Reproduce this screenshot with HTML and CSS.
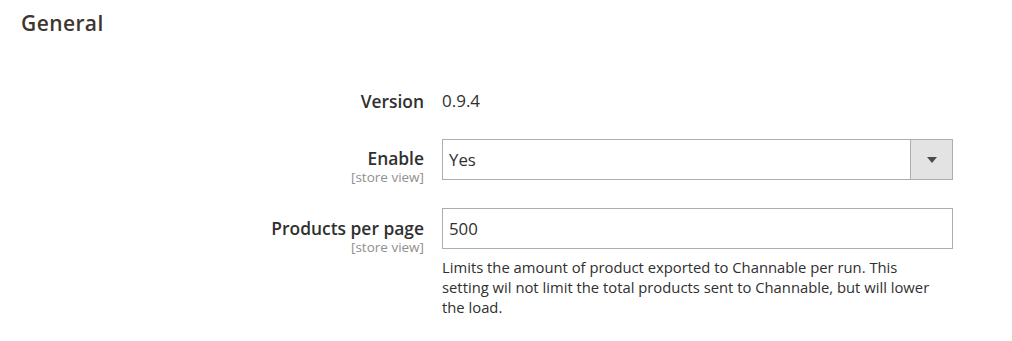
FILE: index.html
```html
<!DOCTYPE html>
<html>
<head>
<meta charset="utf-8">
<link rel="stylesheet" href="styles.css">
</head>
<body>
<div class="section">
  <h2 class="section-title">General</h2>
  <div class="fields">
    <div class="row row-version">
      <div class="label"><span class="label-text">Version</span></div>
      <div class="value"><span class="value-text">0.9.4</span></div>
    </div>
    <div class="row row-enable">
      <div class="label"><span class="label-text">Enable</span><span class="scope">[store view]</span></div>
      <div class="value">
        <div class="select">
          <span class="select-text">Yes</span>
          <span class="select-btn"><span class="arrow"></span></span>
        </div>
      </div>
    </div>
    <div class="row row-products">
      <div class="label"><span class="label-text">Products per page</span><span class="scope">[store view]</span></div>
      <div class="value">
        <div class="input"><span class="input-text">500</span></div>
        <p class="note">Limits the amount of product exported to Channable per run. This setting wil not limit the total products sent to Channable, but will lower the load.</p>
      </div>
    </div>
  </div>
</div>
</body>
</html>
```

FILE: styles.css
```css
html, body {
  margin: 0;
  padding: 0;
  background: #ffffff;
}
body {
  font-family: "Open Sans", "Liberation Sans", sans-serif;
  color: #303030;
  width: 1012px;
  height: 341px;
  overflow: hidden;
}
.section {
  padding: 8px 0 0 21px;
}
.section-title {
  margin: 0;
  font-size: 21px;
  font-weight: 600;
  letter-spacing: 0.4px;
  line-height: 30px;
  color: #41362f;
}
.fields {
  display: flex;
  flex-direction: column;
  margin-top: 51px;
  margin-left: -21px;
}
.row {
  display: grid;
  grid-template-columns: 424px 511px;
  column-gap: 18px;
}
.label {
  display: flex;
  flex-direction: column;
  align-items: flex-end;
  text-align: right;
}
.label-text {
  font-size: 17.4px;
  font-weight: 600;
  line-height: 24px;
  color: #303030;
}
.scope {
  font-size: 13.5px;
  line-height: 15px;
  color: #8f8f8f;
}
.value-text {
  font-size: 17px;
  line-height: 24px;
  color: #303030;
}
.row-enable {
  margin-top: 26px;
}
.row-enable .label {
  padding-top: 7px;
}
.row-products {
  margin-top: 23px;
}
.row-products .label {
  padding-top: 8px;
}
.select {
  box-sizing: border-box;
  height: 41px;
  border: 1px solid #adadad;
  display: flex;
  align-items: stretch;
  background: #fff;
}
.select-text {
  flex: 1;
  padding-left: 6px;
  font-size: 16.8px;
  line-height: 39px;
}
.select-btn {
  width: 41px;
  background: #e3e3e3;
  border-left: 1px solid #adadad;
  display: flex;
  align-items: center;
  justify-content: center;
}
.arrow {
  width: 0;
  height: 0;
  border-left: 5px solid transparent;
  border-right: 5px solid transparent;
  border-top: 6px solid #514943;
}
.input {
  box-sizing: border-box;
  height: 41px;
  border: 1px solid #adadad;
  padding-left: 6px;
  font-size: 16.8px;
  line-height: 39px;
}
.note {
  margin: 8px 0 0 0;
  padding-right: 10px;
  font-size: 14.8px;
  line-height: 20px;
  color: #303030;
}
```
